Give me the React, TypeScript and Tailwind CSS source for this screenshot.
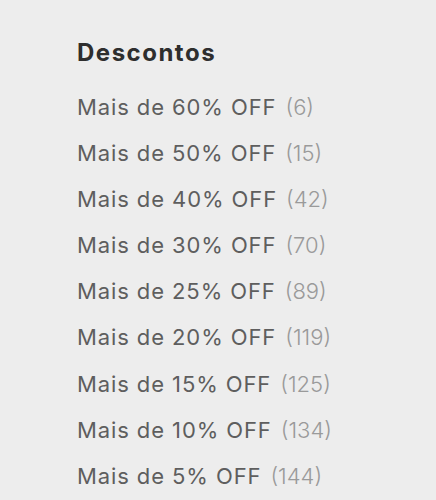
import React from 'react';

const DISCOUNTS = [
  { label: 'Mais de 60% OFF', count: 6 },
  { label: 'Mais de 50% OFF', count: 15 },
  { label: 'Mais de 40% OFF', count: 42 },
  { label: 'Mais de 30% OFF', count: 70 },
  { label: 'Mais de 25% OFF', count: 89 },
  { label: 'Mais de 20% OFF', count: 119 },
  { label: 'Mais de 15% OFF', count: 125 },
  { label: 'Mais de 10% OFF', count: 134 },
  { label: 'Mais de 5% OFF', count: 144 },
];

export default function App() {
  return (
    <div className="w-[436px] h-[500px] overflow-hidden bg-[#ededed] font-['Inter',sans-serif]">
      <div className="pl-[77px] pt-[37px]">
        <h2 className="text-[24px] leading-[32px] font-bold tracking-[1.5px] text-[#2e2e2e]">Descontos</h2>
        <ul className="mt-[24px] flex flex-col">
          {DISCOUNTS.map(d => (
            <li key={d.label} className="h-[46.1px] flex items-start">
              <a href="#" className="text-[22px] leading-[28px] tracking-[0.9px] text-[#5e5e5e]">
                {d.label}
                <span className="ml-[9px] tracking-normal text-[#9a9a9a] font-light">({d.count})</span>
              </a>
            </li>
          ))}
        </ul>
      </div>
    </div>
  );
}
